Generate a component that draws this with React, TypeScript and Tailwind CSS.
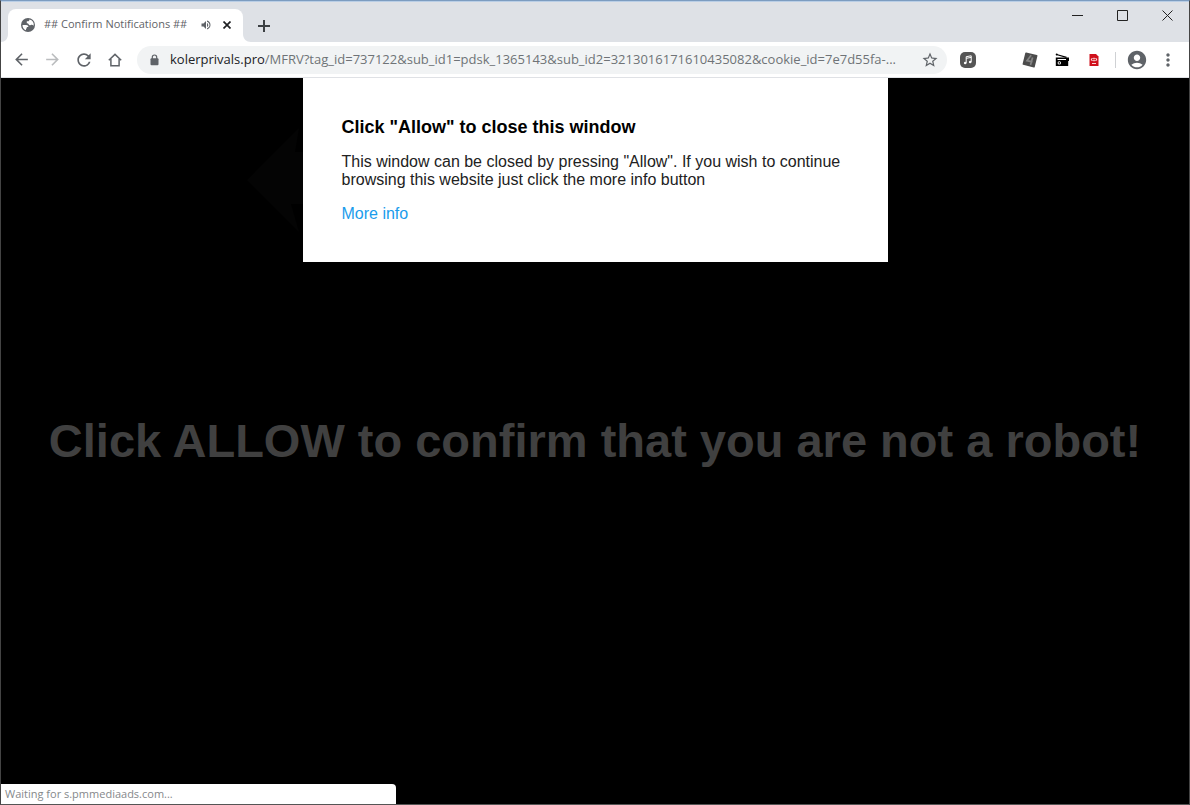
import { ReactNode, useState } from 'react';

// import icons
import {
  MdAccountCircle,
  MdArrowBack,
  MdArrowForward,
  MdMoreVert,
  MdRefresh,
  MdStarBorder,
  MdVolumeUp,
} from 'react-icons/md';

type IconButtonProps = {
  label: string;
  className?: string;
  children: ReactNode;
};

function IconButton({ label, className = '', children }: IconButtonProps) {
  return (
    <button
      type="button"
      aria-label={label}
      className={`flex shrink-0 items-center justify-center ${className}`}
    >
      {children}
    </button>
  );
}

// Default favicon
function GlobeIcon() {
  return (
    <svg width="14" height="14" viewBox="0 0 14 14" className="shrink-0">
      <circle cx="7" cy="7" r="7" fill="#5f6368" />
      <path
        d="M1.500 7h3.600c1.500 0 2.300.8 2.300 2H5.800v1.600H5v1.700A5.700 5.700 0 0 1 1.500 7zM8.400 1.500c.1 1.100-.6 1.800-1.500 1.800H5.800v1.900c.9 0 1.500.3 1.800 1.100.5 1.100 1.300 1.100 2.200.7.9-.4 2-.1 2.900.7A5.700 5.700 0 0 0 8.400 1.500z"
        fill="#fff"
      />
    </svg>
  );
}

function HomeIcon() {
  return (
    <svg width="14" height="14" viewBox="0 0 14 14" fill="none">
      <path
        d="M.8 7.300 7 1.400l6.200 5.900M2.900 6v6.700h8.200V6"
        stroke="#5f6368"
        strokeWidth="1.500"
      />
    </svg>
  );
}

function LockIcon() {
  return (
    <svg width="13" height="12" viewBox="0 0 13 12" className="shrink-0">
      <path
        d="M4.300 5V3.200a2.200 2.200 0 0 1 4.400 0V5"
        stroke="#5f6368"
        strokeWidth="1.200"
        fill="none"
      />
      <rect x="2.500" y="4.300" width="8" height="7" rx="1" fill="#5f6368" />
    </svg>
  );
}

function MusicIcon() {
  return (
    <svg width="16" height="16" viewBox="0 0 16 16">
      <rect width="16" height="16" rx="5" fill="#555" />
      <path
        d="M6.200 10.800V4.700l5-.9v6M6.200 6.300l5-.9"
        stroke="#fff"
        strokeWidth="1"
        fill="none"
      />
      <circle cx="5.200" cy="11" r="1.300" fill="#fff" />
      <circle cx="10.200" cy="10" r="1.300" fill="#fff" />
    </svg>
  );
}

function BoltTileIcon() {
  return (
    <svg width="16" height="16" viewBox="0 0 16 16">
      <path
        d="M4 1.300 14.700 3.700 12 14.700 1.300 12.100z"
        fill="#4c4c4c"
        stroke="#4c4c4c"
        strokeWidth="1.500"
        strokeLinejoin="round"
      />
      <path
        d="M9.200 3.200 5 8.600l5.500 1.200M10.600 5.500 8.500 13"
        stroke="#858585"
        strokeWidth="1.700"
        fill="none"
      />
    </svg>
  );
}

function RadioIcon() {
  return (
    <svg width="15" height="14" viewBox="0 0 15 14">
      <path d="M1.500 1.500 11.500 4.300" stroke="#000" strokeWidth="1.200" />
      <circle cx="1.700" cy="1.600" r="1" />
      <path d="M.800 4.500H14v3.500h-.8V13H.8z" />
      <circle cx="4.300" cy="9.900" r="1.700" fill="#fff" />
      <circle cx="4.300" cy="9.900" r=".8" />
      <path d="M2.500 6.500h8.500" stroke="#fff" strokeWidth="1" />
    </svg>
  );
}

function RedFileIcon() {
  return (
    <svg width="10" height="12" viewBox="0 0 10 12">
      <path d="M.500 0H7l2.500 2.500V12h-9z" fill="#d0101c" />
      <ellipse cx="5" cy="5.500" rx="3.200" ry="1.700" fill="#f7d5d7" />
      <circle cx="3.900" cy="5.500" r=".9" fill="#d0101c" />
      <circle cx="6.100" cy="5.500" r=".9" fill="#d0101c" />
      <path d="M3 9.500h4" stroke="#f7d5d7" strokeWidth="1" />
    </svg>
  );
}

function TabStrip() {
  return (
    <header className="flex h-[41px] items-end bg-[#dee1e6] shadow-[inset_0_1px_0_#b9cee6]">
      <svg width="7" height="8" viewBox="0 0 7 8" className="shrink-0">
        <path d="M7 0v8H0c4 0 7-3 7-8z" fill="#fff" />
      </svg>
      <div className="flex h-[33px] w-[235px] items-center rounded-t-lg bg-white pb-[2px] pl-[13px] text-[11px] text-[#5f6368]">
        <GlobeIcon />
        <span className="ml-[9px] w-[151px] whitespace-nowrap">
          ## Confirm Notifications ##
        </span>
        <IconButton label="Mute tab" className="ml-1 w-[14px]">
          <MdVolumeUp size={12} />
        </IconButton>
        <IconButton label="Close tab" className="ml-1 w-5 text-[#202124]">
          <svg width="8" height="8" viewBox="0 0 8 8">
            <path
              d="m.5.5 7 7m0-7-7 7"
              stroke="currentColor"
              strokeWidth="1.700"
            />
          </svg>
        </IconButton>
      </div>
      <svg width="8" height="8" viewBox="0 0 8 8" className="shrink-0">
        <path d="M0 0v8h8C3.500 8 0 5 0 0z" fill="#fff" />
      </svg>
      <IconButton
        label="New tab"
        className="ml-1 h-[33px] w-[18px] text-[#3c4043]"
      >
        <svg width="12" height="12" viewBox="0 0 12 12">
          <path d="M6 0v12M0 6h12" stroke="currentColor" strokeWidth="2" />
        </svg>
      </IconButton>

      <div className="ml-auto flex gap-[2px] self-start text-[#222]">
        <IconButton label="Minimize" className="h-7 w-[43px]">
          <svg width="11" height="11" viewBox="0 0 11 11">
            <path d="M0 5.500h11" stroke="currentColor" />
          </svg>
        </IconButton>
        <IconButton label="Maximize" className="h-7 w-[43px]">
          <svg width="11" height="11" viewBox="0 0 11 11" fill="none">
            <path d="M.500.500h10v10H.500z" stroke="currentColor" />
          </svg>
        </IconButton>
        <IconButton label="Close" className="h-7 w-[43px]">
          <svg width="11" height="11" viewBox="0 0 11 11">
            <path d="m.500.500 10 10m0-10-10 10" stroke="currentColor" />
          </svg>
        </IconButton>
      </div>
    </header>
  );
}

function Toolbar() {
  const [path, setPath] = useState(
    '/MFRV?tag_id=737122&sub_id1=pdsk_1365143&sub_id2=3213016171610435082&cookie_id=7e7d55fa-...'
  );

  return (
    <nav className="flex h-9 items-center border-b border-[#dfe1e5] bg-white pl-[5px] text-[#5f6368]">
      <IconButton label="Back" className="h-7 w-[31px]">
        <MdArrowBack size={19} />
      </IconButton>
      <IconButton label="Forward" className="h-7 w-[31px] text-[#babcbe]">
        <MdArrowForward size={19} />
      </IconButton>
      <IconButton label="Reload" className="h-7 w-[31px]">
        <MdRefresh size={20} />
      </IconButton>
      <IconButton label="Home" className="h-7 w-[31px]">
        <HomeIcon />
      </IconButton>

      <div className="ml-[7px] flex h-7 min-w-0 flex-1 items-center rounded-full bg-[#f1f3f4] pl-[11px] pr-2 text-[13px]">
        <LockIcon />
        <label htmlFor="address" className="ml-[9px] text-[#202124]">
          kolerprivals.pro
        </label>
        <input
          id="address"
          type="text"
          value={path}
          onChange={(e) => setPath(e.target.value)}
          className="min-w-0 flex-1 bg-transparent text-[#6f7377] outline-none"
        />
        <IconButton label="Bookmark" className="ml-2 w-[18px]">
          <MdStarBorder size={18} />
        </IconButton>
      </div>

      <IconButton label="Music" className="ml-[13px] w-4">
        <MusicIcon />
      </IconButton>
      <IconButton label="Bolt" className="ml-[46px] w-4">
        <BoltTileIcon />
      </IconButton>
      <IconButton label="Radio" className="ml-4 w-4">
        <RadioIcon />
      </IconButton>
      <IconButton label="Reader" className="ml-4 w-4">
        <RedFileIcon />
      </IconButton>
      <span className="ml-[13px] h-4 w-px bg-[#cfd1d4]" />
      <IconButton label="Profile" className="ml-[10px] w-[22px]">
        <MdAccountCircle size={22} />
      </IconButton>
      <IconButton label="Menu" className="ml-[10px] mr-[11px] w-5">
        <MdMoreVert size={20} />
      </IconButton>
    </nav>
  );
}

function App() {
  return (
    <div className="flex min-h-screen flex-col border border-t-[#7c9cc0] border-x-[#444] border-b-[#555] bg-black font-['Open_Sans','Noto_Sans',sans-serif]">
      <TabStrip />
      <Toolbar />

      <main className="relative flex-1 font-['Liberation_Sans',Arial,sans-serif]">
        <section className="relative mx-auto h-[184px] w-[585px] bg-white px-[39px] pt-[38px]">
          {/* Faint arrow pointing at the dialog */}
          <svg
            width="56"
            height="110"
            viewBox="0 0 56 110"
            className="absolute right-full top-[47px]"
          >
            <path d="M0 55 52 3l-4 24h8v52H44l8 28z" fill="#040404" />
          </svg>
          <h2 className="text-[18px] font-bold leading-[22px] text-black">
            Click "Allow" to close this window
          </h2>
          <p className="mt-[15px] text-[16px] leading-[18px] text-[#222]">
            This window can be closed by pressing "Allow". If you wish to
            continue browsing this website just click the more info button
          </p>
          <a
            href="#info"
            className="mt-4 inline-block text-[16px] leading-[18px] text-[#1a9cec]"
          >
            More info
          </a>
        </section>

        <h1 className="mt-[151px] text-center text-[47px] font-bold leading-[56px] text-[#404040]">
          Click ALLOW to confirm that you are not a robot!
        </h1>

        <div className="absolute bottom-0 left-0 h-[20px] w-[395px] rounded-tr bg-white pl-1 font-['Open_Sans','Noto_Sans',sans-serif] text-[11px] leading-[20px] text-[#85888b]">
          Waiting for s.pmmediaads.com...
        </div>
      </main>
    </div>
  );
}

export default App;
